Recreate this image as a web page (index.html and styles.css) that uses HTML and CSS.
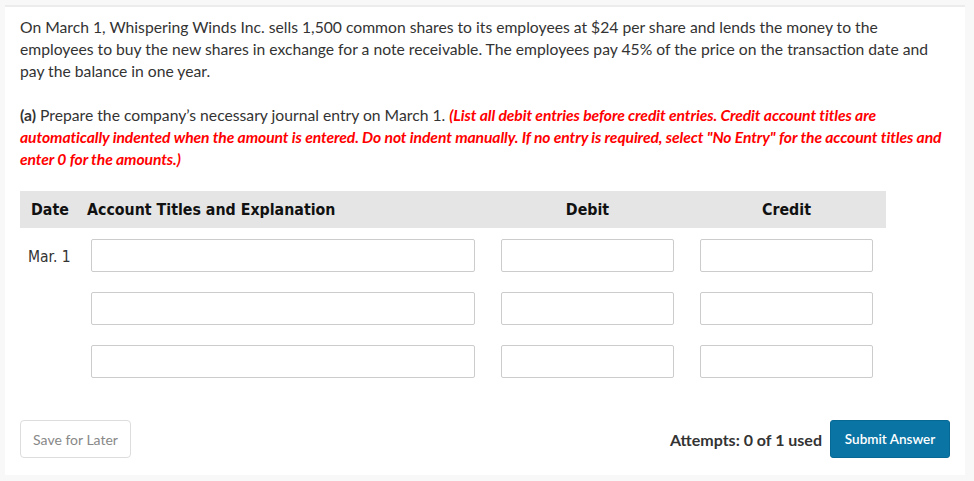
FILE: index.html
```html
<!DOCTYPE html>
<html>
<head>
<meta charset="utf-8">
<link rel="stylesheet" href="styles.css">
</head>
<body>
<div class="panel">
  <p class="question">On March 1, Whispering Winds Inc. sells 1,500 common shares to its employees at $24 per share and lends the money to the employees to buy the new shares in exchange for a note receivable. The employees pay 45% of the price on the transaction date and pay the balance in one year.</p>
  <p class="part"><span class="label">(a)</span> Prepare the company’s necessary journal entry on March 1. <em class="note">(List all debit entries before credit entries. Credit account titles are automatically indented when the amount is entered. Do not indent manually. If no entry is required, select "No Entry" for the account titles and enter 0 for the amounts.)</em></p>
  <div class="journal">
    <div class="head">
      <div class="h-date">Date</div>
      <div class="h-acct">Account Titles and Explanation</div>
      <div class="h-amt">Debit</div>
      <div class="h-amt">Credit</div>
    </div>
    <div class="row">
      <div class="date">Mar. 1</div>
      <input class="acct" type="text">
      <input class="amt" type="text">
      <input class="amt" type="text">
    </div>
    <div class="row">
      <div class="date"></div>
      <input class="acct" type="text">
      <input class="amt" type="text">
      <input class="amt" type="text">
    </div>
    <div class="row">
      <div class="date"></div>
      <input class="acct" type="text">
      <input class="amt" type="text">
      <input class="amt" type="text">
    </div>
  </div>
  <div class="footer">
    <button class="save">Save for Later</button>
    <div class="right">
      <span class="attempts">Attempts: 0 of 1 used</span>
      <button class="submit">Submit Answer</button>
    </div>
  </div>
</div>
</body>
</html>
```
FILE: styles.css
```css
html, body {
  margin: 0;
  padding: 0;
  background: #f8f8f8;
}
body {
  padding: 5px 9px 6px 5px;
  font-family: Lato, "Open Sans", sans-serif;
  color: #333;
}
.panel {
  background: #fff;
  border-top: 2px solid #ececec;
  padding: 9px 15px 17px 15px;
  height: 442px;
  box-sizing: content-box;
}
.question, .part {
  margin: 0;
  font-size: 15.7px;
  line-height: 22px;
  color: #333;
  max-width: 926px;
}
.question {
  margin-bottom: 22px;
}
.label {
  font-weight: 700;
}
.note {
  color: #f00;
  font-weight: 700;
  font-style: italic;
  letter-spacing: -0.1px;
}
.journal {
  margin-top: 21px;
  width: 866px;
}
.head {
  display: flex;
  align-items: center;
  height: 37px;
  background: #e5e5e5;
  font-family: "DejaVu Sans Condensed", "DejaVu Sans", sans-serif;
  font-weight: 700;
  font-size: 15.8px;
  color: #111;
}
.head > div {
  flex-shrink: 0;
}
.h-date {
  width: 56px;
  padding-left: 11px;
}
.h-acct {
  width: 384px;
  margin-right: 30px;
}
.h-amt {
  width: 173px;
  margin-right: 26px;
  text-align: center;
}
.row {
  display: flex;
  align-items: center;
  margin-top: 11px;
  height: 32px;
}
.row + .row {
  margin-top: 21px;
}
.row > * {
  flex-shrink: 0;
}
.date {
  width: 63px;
  padding-left: 8px;
  padding-top: 3px;
  font-family: "DejaVu Sans Condensed", "DejaVu Sans", sans-serif;
  font-size: 15.5px;
  color: #333;
}
input {
  box-sizing: border-box;
  height: 33px;
  border: 1px solid #ccc;
  border-radius: 2px;
  background: #fff;
  margin: 0;
  padding: 0 6px;
}
.acct {
  width: 384px;
  margin-right: 26px;
}
.amt {
  width: 173px;
  margin-right: 26px;
}
.amt:last-child {
  margin-right: 0;
}
.footer {
  display: flex;
  justify-content: space-between;
  align-items: center;
  margin-top: 43px;
}
.save {
  height: 38px;
  width: 111px;
  background: #fff;
  border: 1px solid #ddd;
  border-radius: 4px;
  font-family: Lato, sans-serif;
  font-size: 14px;
  color: #888;
  padding: 0;
}
.right {
  display: flex;
  align-items: center;
  gap: 8px;
}
.attempts {
  font-size: 16px;
  font-weight: 700;
  color: #333;
}
.submit {
  height: 38px;
  width: 120px;
  background: #0a75a5;
  border: 1px solid #066895;
  border-radius: 3px;
  color: #fff;
  font-family: Lato, sans-serif;
  font-size: 13.5px;
  font-weight: 600;
  padding: 0;
}
```
